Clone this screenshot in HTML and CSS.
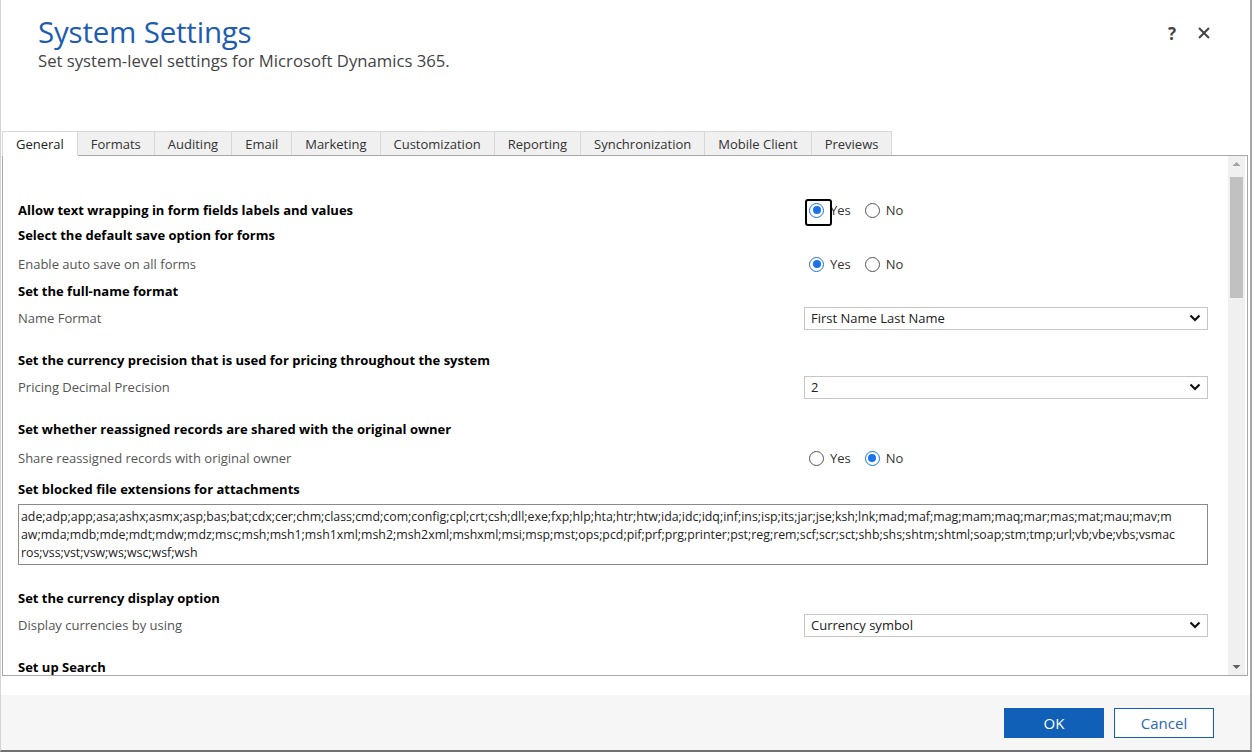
FILE: index.html
```html
<!DOCTYPE html>
<html>
<head>
<meta charset="utf-8">
<title>System Settings</title>
<link rel="stylesheet" href="styles.css">
</head>
<body>
<div class="dialog">
  <header class="header">
    <div class="titles">
      <h1 class="title">System Settings</h1>
      <p class="subtitle">Set system-level settings for Microsoft Dynamics 365.</p>
    </div>
    <div class="header-actions">
      <span class="help">?</span>
      <svg class="close" width="14" height="14" viewBox="0 0 14 14"><path d="M2 2 L12 12 M12 2 L2 12" stroke="#444" stroke-width="2" fill="none"/></svg>
    </div>
  </header>

  <nav class="tabs">
    <div class="tab active">General</div>
    <div class="tab">Formats</div>
    <div class="tab">Auditing</div>
    <div class="tab">Email</div>
    <div class="tab">Marketing</div>
    <div class="tab">Customization</div>
    <div class="tab">Reporting</div>
    <div class="tab">Synchronization</div>
    <div class="tab">Mobile Client</div>
    <div class="tab">Previews</div>
  </nav>

  <section class="panel">
    <div class="content">
      <div class="row first">
        <div class="heading">Allow text wrapping in form fields labels and values</div>
        <div class="control radios">
          <label class="radio"><span class="dot on focus"></span>Yes</label>
          <label class="radio"><span class="dot"></span>No</label>
        </div>
      </div>
      <div class="heading h-after-radio">Select the default save option for forms</div>
      <div class="row r-after-h">
        <div class="label">Enable auto save on all forms</div>
        <div class="control radios">
          <label class="radio"><span class="dot on"></span>Yes</label>
          <label class="radio"><span class="dot"></span>No</label>
        </div>
      </div>
      <div class="heading h-after-radio2">Set the full-name format</div>
      <div class="row r-sel">
        <div class="label">Name Format</div>
        <div class="control"><div class="select">First Name Last Name<svg class="chev" width="12" height="8" viewBox="0 0 12 8"><path d="M1.5 1.5 L6 6 L10.5 1.5" stroke="#111" stroke-width="2.2" fill="none"/></svg></div></div>
      </div>
      <div class="heading h-after-select">Set the currency precision that is used for pricing throughout the system</div>
      <div class="row r-sel">
        <div class="label">Pricing Decimal Precision</div>
        <div class="control"><div class="select">2<svg class="chev" width="12" height="8" viewBox="0 0 12 8"><path d="M1.5 1.5 L6 6 L10.5 1.5" stroke="#111" stroke-width="2.2" fill="none"/></svg></div></div>
      </div>
      <div class="heading h-after-select">Set whether reassigned records are shared with the original owner</div>
      <div class="row r-after-h">
        <div class="label">Share reassigned records with original owner</div>
        <div class="control radios">
          <label class="radio"><span class="dot"></span>Yes</label>
          <label class="radio"><span class="dot on"></span>No</label>
        </div>
      </div>
      <div class="heading h-after-radio3">Set blocked file extensions for attachments</div>
      <div class="textarea"><span class="line">ade;adp;app;asa;ashx;asmx;asp;bas;bat;cdx;cer;chm;class;cmd;com;config;cpl;crt;csh;dll;exe;fxp;hlp;hta;htr;htw;ida;idc;idq;inf;ins;isp;its;jar;jse;ksh;lnk;mad;maf;mag;mam;maq;mar;mas;mat;mau;mav;m</span><span class="line">aw;mda;mdb;mde;mdt;mdw;mdz;msc;msh;msh1;msh1xml;msh2;msh2xml;mshxml;msi;msp;mst;ops;pcd;pif;prf;prg;printer;pst;reg;rem;scf;scr;sct;shb;shs;shtm;shtml;soap;stm;tmp;url;vb;vbe;vbs;vsmac</span><span class="line">ros;vss;vst;vsw;ws;wsc;wsf;wsh</span></div>
      <div class="heading h-after-textarea">Set the currency display option</div>
      <div class="row r-sel">
        <div class="label">Display currencies by using</div>
        <div class="control"><div class="select">Currency symbol<svg class="chev" width="12" height="8" viewBox="0 0 12 8"><path d="M1.5 1.5 L6 6 L10.5 1.5" stroke="#111" stroke-width="2.2" fill="none"/></svg></div></div>
      </div>
      <div class="heading h-after-select">Set up Search</div>
    </div>
    <div class="scrollbar">
      <svg class="arrow" width="17" height="17" viewBox="0 0 17 17"><path d="M4.5 10 L8.5 6 L12.5 10 Z" fill="#a3a3a3"/></svg>
      <div class="track"><div class="thumb"></div></div>
      <svg class="arrow" width="17" height="17" viewBox="0 0 17 17"><path d="M4.5 7 L8.5 11 L12.5 7 Z" fill="#606060"/></svg>
    </div>
  </section>

  <footer class="footer">
    <button class="btn ok">OK</button>
    <button class="btn cancel">Cancel</button>
  </footer>
</div>
</body>
</html>
```

FILE: styles.css
```css
* { box-sizing: border-box; }
html, body { margin: 0; padding: 0; background: #fff; }
body { font-family: "Open Sans", "Noto Sans", "Liberation Sans", sans-serif; color: #000; }

.dialog {
  width: 1252px;
  height: 752px;
  border-left: 1px solid #d4d4d4;
  border-right: 2px solid #a8a8a8;
  border-bottom: 2px solid #707070;
  display: flex;
  flex-direction: column;
  background: #fff;
}

.header {
  height: 131px;
  display: flex;
  justify-content: space-between;
  padding: 13px 0 0 37px;
}
.title {
  margin: 0;
  font-weight: 400;
  font-size: 29.5px;
  line-height: 37px;
  color: #1d5cb0;
  letter-spacing: -0.2px;
}
.subtitle {
  margin: 0;
  font-size: 16.7px;
  line-height: 22px;
  color: #444;
}
.header-actions {
  display: flex;
  align-items: center;
  gap: 21px;
  height: 40px;
  margin-right: 39px;
  margin-top: 0;
}
.help { font-size: 17px; font-weight: 700; color: #444; }
.close { display: block; }

.tabs {
  display: flex;
  padding-left: 1px;
  height: 24px;
}
.tab {
  height: 25px;
  padding: 0 13px;
  font-size: 13px;
  line-height: 24px;
  color: #333;
  background: #f0f0f0;
  border: 1px solid #d8d8d8;
  border-bottom: 1px solid #a8a8a8;
  margin-right: -1px;
}
.tab.active {
  background: #fff;
  color: #222;
  border-bottom-color: #fff;
  position: relative;
  z-index: 1;
}

.panel {
  height: 521px;
  margin: 0 2px 0 1px;
  border: 1px solid #a8a8a8;
  display: flex;
  overflow: hidden;
}
.content {
  flex: 1;
  padding: 42px 20px 0 15px;
  overflow: hidden;
}

.row { display: flex; align-items: center; height: 24px; }
.heading {
  font-weight: 700;
  font-size: 13px;
  line-height: 20px;
  height: 20px;
  color: #000;
  white-space: nowrap;
}
.row .heading { flex: 1; }
.label {
  flex: 1;
  font-size: 13px;
  color: #555;
}
.control { width: 404px; }

.h-after-radio { margin-top: 3px; }
.h-after-radio2 { margin-top: 5px; }
.h-after-radio3 { margin-top: 9px; }
.h-after-select { margin-top: 20px; }
.h-after-textarea { margin-top: 23px; }
.r-after-h { margin-top: 7px; }
.r-sel { margin-top: 5px; }

.radios { display: flex; gap: 14px; padding-left: 5px; }
.radio {
  display: flex;
  align-items: center;
  gap: 6px;
  font-size: 13px;
  color: #333;
  height: 20px;
}
.dot {
  width: 15px;
  height: 15px;
  border-radius: 50%;
  border: 1px solid #555;
  background: #fff;
  position: relative;
}
.dot.on { border-color: #1a73e8; }
.dot.on::after {
  content: "";
  position: absolute;
  left: 2.5px; top: 2.5px;
  width: 8px; height: 8px;
  border-radius: 50%;
  background: #1a73e8;
}
.dot.focus::before {
  content: "";
  position: absolute;
  left: -5px; top: -5px;
  width: 23px; height: 23px;
  border: 2px solid #000;
  border-radius: 3px;
}

.select {
  height: 23px;
  border: 1px solid #c6c6c6;
  padding: 0 6px 0 6px;
  font-size: 13px;
  line-height: 21px;
  color: #222;
  display: flex;
  justify-content: space-between;
  align-items: center;
}
.chev { display: block; }

.textarea {
  margin-top: 5px;
  height: 61px;
  border: 1px solid #8a8a8a;
  padding: 3px 3px 0 2px;
  font-size: 12.35px;
  line-height: 18px;
  color: #222;
}
.line { display: block; white-space: nowrap; overflow: hidden; }

.scrollbar {
  width: 17px;
  margin-right: 2px;
  background: #f0f0f0;
  display: flex;
  flex-direction: column;
}
.arrow { display: block; flex: none; }
.track { flex: 1; padding: 4px 2px 0 2px; }
.thumb { height: 121px; background: #c1c1c1; }

.footer {
  flex: 1;
  margin-top: 19px;
  background: #f6f6f6;
  display: flex;
  justify-content: flex-end;
  align-items: flex-start;
  gap: 10px;
  padding: 13px 36px 0 0;
}
.btn {
  width: 100px;
  height: 30px;
  font-family: inherit;
  font-size: 15px;
  cursor: pointer;
}
.ok { background: #1160b8; border: 1px solid #1160b8; color: #fff; }
.cancel { background: #fff; border: 1px solid #1160b8; color: #2a67b8; }
```
